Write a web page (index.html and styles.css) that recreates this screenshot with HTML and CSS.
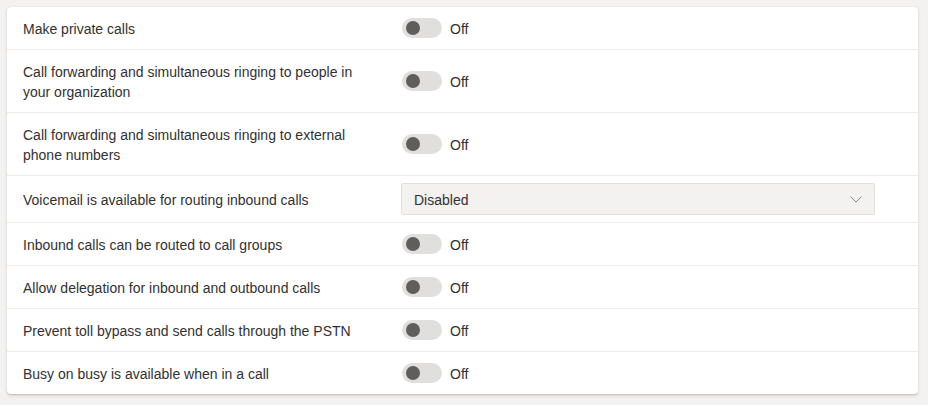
FILE: index.html
```html
<!DOCTYPE html>
<html lang="en">
<head>
<meta charset="utf-8">
<title>Calling policy</title>
<link rel="stylesheet" href="styles.css">
</head>
<body>
<div class="card">
  <div class="row">
    <div class="label">Make private calls</div>
    <div class="control"><span class="toggle"><span class="knob"></span></span><span class="state">Off</span></div>
  </div>
  <div class="row">
    <div class="label">Call forwarding and simultaneous ringing to people in your organization</div>
    <div class="control"><span class="toggle"><span class="knob"></span></span><span class="state">Off</span></div>
  </div>
  <div class="row">
    <div class="label">Call forwarding and simultaneous ringing to external phone numbers</div>
    <div class="control"><span class="toggle"><span class="knob"></span></span><span class="state">Off</span></div>
  </div>
  <div class="row row-select">
    <div class="label">Voicemail is available for routing inbound calls</div>
    <div class="control">
      <div class="select">
        <span class="select-text">Disabled</span>
        <svg class="chevron" width="12" height="7" viewBox="0 0 12 7"><path d="M0.5 0.5 L6 6 L11.5 0.5" fill="none" stroke="#8a8886" stroke-width="1"/></svg>
      </div>
    </div>
  </div>
  <div class="row">
    <div class="label">Inbound calls can be routed to call groups</div>
    <div class="control"><span class="toggle"><span class="knob"></span></span><span class="state">Off</span></div>
  </div>
  <div class="row">
    <div class="label">Allow delegation for inbound and outbound calls</div>
    <div class="control"><span class="toggle"><span class="knob"></span></span><span class="state">Off</span></div>
  </div>
  <div class="row">
    <div class="label">Prevent toll bypass and send calls through the PSTN</div>
    <div class="control"><span class="toggle"><span class="knob"></span></span><span class="state">Off</span></div>
  </div>
  <div class="row">
    <div class="label">Busy on busy is available when in a call</div>
    <div class="control"><span class="toggle"><span class="knob"></span></span><span class="state">Off</span></div>
  </div>
</div>
</body>
</html>
```

FILE: styles.css
```css
html, body {
  margin: 0;
  padding: 0;
}
body {
  background: #f3f2f1;
  font-family: "Segoe UI", "Liberation Sans", Arial, sans-serif;
  font-size: 14px;
  line-height: 20px;
  color: #323130;
  padding: 7px 10px 10px 7px;
}
.card {
  background: #ffffff;
  border-radius: 4px;
  box-shadow: 0 1.6px 3.6px rgba(0,0,0,0.12), 0 0.3px 0.9px rgba(0,0,0,0.1);
  width: 911px;
}
.row {
  display: grid;
  grid-template-columns: 362px 1fr;
  column-gap: 16px;
  align-items: center;
  padding: 11px 43px 11px 16px;
  border-bottom: 1px solid #edebe9;
}
.row:last-child {
  border-bottom: none;
}
.row-select {
  padding-top: 7px;
  padding-bottom: 7px;
}
.label {
  max-width: 345px;
  padding-top: 1px;
  margin-bottom: -1px;
}
.control {
  display: flex;
  align-items: center;
  height: 20px;
}
.row-select .control {
  height: 32px;
}
.toggle {
  width: 40px;
  height: 20px;
  border-radius: 10px;
  background: #e1dfdd;
  display: flex;
  align-items: center;
  padding-left: 4px;
  box-sizing: border-box;
  margin-left: 1px;
}
.knob {
  width: 14px;
  height: 14px;
  border-radius: 50%;
  background: #605e5c;
}
.state {
  margin-left: 8px;
  padding-top: 2px;
  line-height: 18px;
}
.select {
  flex: 1;
  height: 32px;
  box-sizing: border-box;
  background: #f3f2f1;
  border: 1px solid #e1dfdd;
  border-radius: 2px;
  display: flex;
  align-items: center;
  justify-content: space-between;
  padding: 0 12px 0 12px;
}
.select-text {
  padding-top: 1px;
}
.chevron {
  display: block;
}
```
